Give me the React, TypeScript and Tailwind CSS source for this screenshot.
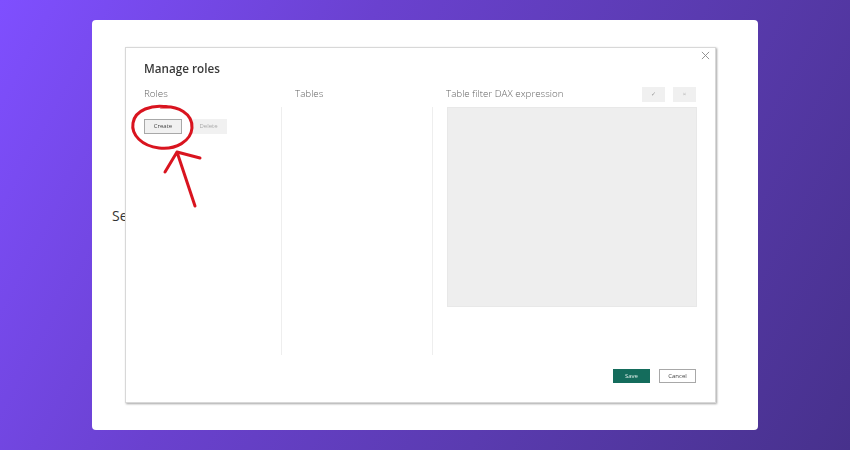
export default function App() {
  return (
    <div className="h-[450px] w-[850px] overflow-hidden bg-[linear-gradient(118deg,#7f4fff_0%,#6a41cf_35%,#5a3bb0_65%,#47318c_100%)] px-[92px] py-[20px] font-['Open_Sans',sans-serif]">
      <div className="relative h-[410px] w-[666px] rounded-[4px] bg-white pl-[33px] pt-[27px]">
        {/* text of the page, the dialog image covers most of it */}
        <span className="absolute left-[20px] top-[186px] text-[14px] leading-5 text-[#333]">Se</span>

        <div className="relative flex h-[356px] w-[591px] flex-col border border-[#d8d8d8] bg-white pl-[18px] pr-[19px] shadow-[1px_1px_2px_#a5a5a5] blur-[0.3px]">
          <button className="absolute right-[5px] top-[3px] text-[#888]">
            <svg width="9" height="9" viewBox="0 0 10 10" fill="none" stroke="currentColor" strokeWidth="1">
              <path d="M1 1l8 8M9 1l-8 8" />
            </svg>
          </button>

          <h2 className="mt-[11px] text-[11.7px] font-semibold leading-[18px] text-[#3a3a3a]">Manage roles</h2>

          <div className="mt-[8px] flex h-[18px] items-center text-[9.8px] font-light text-[#666]">
            <div className="w-[151px]">Roles</div>
            <div className="w-[151px]">Tables</div>
            <div className="flex flex-1 items-center justify-between">
              <span>Table filter DAX expression</span>
              <div className="mt-[1px] flex gap-[8px]">
                <div className="flex h-[15px] w-[23px] items-center justify-center bg-[#f0f0f0] text-[6px] text-[#999]">✓</div>
                <div className="flex h-[15px] w-[23px] items-center justify-center bg-[#f0f0f0] text-[6px] text-[#999]">×</div>
              </div>
            </div>
          </div>

          <div className="mt-[4px] flex h-[248px]">
            <div className="relative w-[138px] shrink-0 border-r border-[#eeeeee]">
              <div className="mt-[12px] flex gap-[8px]">
                <button className="h-[15px] w-[38px] border border-[#a8a8a8] bg-[#f1f1f1] text-[6px] leading-[13px] text-[#444]">Create</button>
                <button className="h-[15px] w-[37px] bg-[#f1f1f1] text-[6px] leading-[15px] text-[#aaa]">Delete</button>
              </div>
              {/* red annotation */}
              <svg className="absolute -left-[16px] -top-[4px]" width="90" height="108" viewBox="0 0 90 108" fill="none" stroke="#d9141f" strokeLinecap="round" strokeLinejoin="round">
                <path strokeWidth="3" d="M40 4C24 1 7 7 5 20c-2 12 9 23 26 25 17 2 32-7 33-20C65 11 50 2 33 4" />
                <path strokeWidth="3" d="M67 103L49 49M49 49L37 69M49 49L72 55" />
              </svg>
            </div>
            <div className="w-[151px] shrink-0 border-r border-[#eeeeee]" />
            <div className="flex-1 pl-[14px]">
              <div className="h-[200px] w-[250px] border border-[#e8e8e8] bg-[#eeeeee]" />
            </div>
          </div>

          <div className="mt-[14px] flex justify-end gap-[9px]">
            <button className="h-[14px] w-[37px] bg-[#146c5c] text-[6px] leading-[14px] text-[#dfeee9]">Save</button>
            <button className="h-[14px] w-[37px] border border-[#a8a8a8] bg-white text-[6px] leading-[12px] text-[#444]">Cancel</button>
          </div>
        </div>
      </div>
    </div>
  );
}
